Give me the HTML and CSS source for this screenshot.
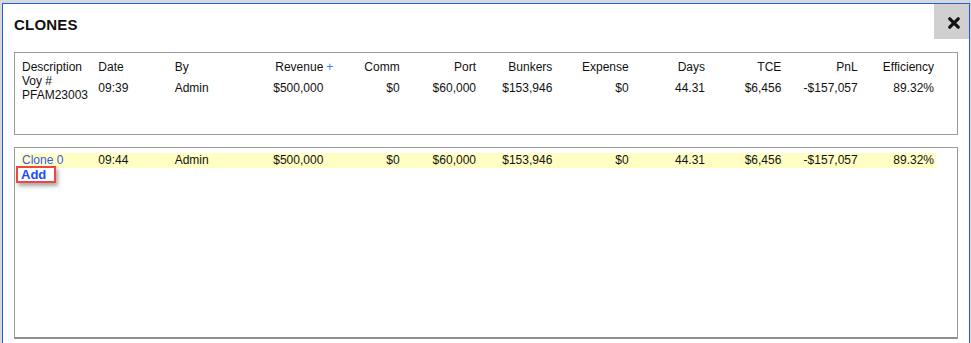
FILE: index.html
```html
<html>
    <head>
        <link rel="stylesheet" href="styles.css">
    </head>
    <body>
        <div id="clones-modal">
            <header>
                <div id="titulo">CLONES</div>
                <div id="fechar">
                    <svg width="12" height="12" viewBox="0 0 12 12">
                        <path d="M1.8 1.8 L10.2 10.2 M10.2 1.8 L1.8 10.2" stroke="#111" stroke-width="3.2" stroke-linecap="round"/>
                    </svg>
                </div>
            </header>

            <div class="caixa" id="caixa-voy">
                <div class="grade">
                    <div class="cab">Description</div>
                    <div class="cab">Date</div>
                    <div class="cab">By</div>
                    <div class="cab dir rev">Revenue<span class="mais">+</span></div>
                    <div class="cab dir">Comm</div>
                    <div class="cab dir">Port</div>
                    <div class="cab dir">Bunkers</div>
                    <div class="cab dir">Expense</div>
                    <div class="cab dir">Days</div>
                    <div class="cab dir">TCE</div>
                    <div class="cab dir">PnL</div>
                    <div class="cab dir">Efficiency</div>

                    <div class="cel">Voy #<br>PFAM23003</div>
                    <div class="cel meio">09:39</div>
                    <div class="cel meio">Admin</div>
                    <div class="cel meio dir">$500,000</div>
                    <div class="cel meio dir">$0</div>
                    <div class="cel meio dir">$60,000</div>
                    <div class="cel meio dir">$153,946</div>
                    <div class="cel meio dir">$0</div>
                    <div class="cel meio dir">44.31</div>
                    <div class="cel meio dir">$6,456</div>
                    <div class="cel meio dir">-$157,057</div>
                    <div class="cel meio dir">89.32%</div>
                </div>
            </div>

            <div class="caixa" id="caixa-clones">
                <div class="grade linha-clone">
                    <div class="cel"><a class="link-clone">Clone 0</a></div>
                    <div class="cel">09:44</div>
                    <div class="cel">Admin</div>
                    <div class="cel dir">$500,000</div>
                    <div class="cel dir">$0</div>
                    <div class="cel dir">$60,000</div>
                    <div class="cel dir">$153,946</div>
                    <div class="cel dir">$0</div>
                    <div class="cel dir">44.31</div>
                    <div class="cel dir">$6,456</div>
                    <div class="cel dir">-$157,057</div>
                    <div class="cel dir">89.32%</div>
                </div>
                <a id="add">Add</a>
            </div>
        </div>
    </body>
</html>
```

FILE: styles.css
```css
html {
    height: 100%;
}
body {
    margin: 0;
    height: 100%;
    overflow: hidden;
    background-color: #d8d8d8;
    font-family: "Liberation Sans", Arial, sans-serif;
    color: #111;
}
#clones-modal {
    margin: 3px 0 0 2px;
    width: 966px;
    height: 339px;
    background-color: white;
    border: 1px solid #1f5cf0;
    border-bottom: none;
}
header {
    display: flex;
    justify-content: space-between;
    align-items: flex-start;
    height: 48px;
}
#titulo {
    font-weight: bold;
    font-size: 15px;
    line-height: 18px;
    padding: 12px 0 0 11px;
    letter-spacing: 0.2px;
}
#fechar {
    width: 35px;
    height: 35px;
    background-color: #d0d0d0;
    display: flex;
    align-items: center;
    justify-content: center;
    padding-left: 5px;
    padding-top: 2px;
    box-sizing: border-box;
}
.caixa {
    box-sizing: border-box;
    margin: 0 11px;
    border: 1px solid #9c9c9c;
    padding: 7px 5px;
}
#caixa-voy {
    height: 83px;
}
#caixa-clones {
    margin-top: 12px;
    height: 192px;
    padding-top: 5px;
    border-bottom: 2px solid #8f8f8f;
}
.grade {
    display: grid;
    grid-template-columns: repeat(12, 1fr);
    width: 916px;
    font-size: 12px;
    line-height: 14px;
}
.cab, .cel {
    padding: 0 2px;
}
.dir {
    text-align: right;
}
.meio {
    align-self: center;
}
.rev {
    position: relative;
}
.mais {
    position: absolute;
    right: -8px;
    color: #3a7bff;
}
.linha-clone {
    background-color: #ffffc4;
}
.linha-clone .cel {
    line-height: 15px;
}
.link-clone {
    color: #3a55f5;
}
#add {
    display: inline-block;
    margin: -2px 0 0 -4px;
    padding: 0 8px 0 3px;
    border: 2px solid #ec4646;
    font-size: 13px;
    font-weight: bold;
    line-height: 13px;
    color: #1a4dff;
    box-shadow: 2px 3px 4px rgba(0, 0, 0, 0.35);
}
```
